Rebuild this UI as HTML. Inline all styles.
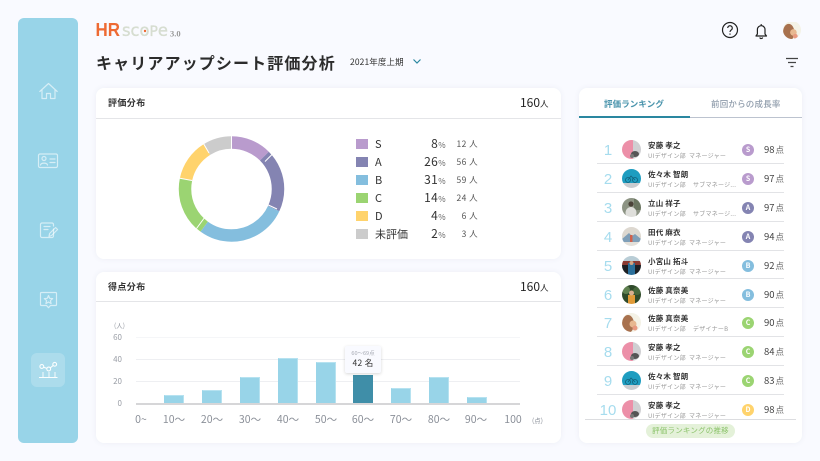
<!DOCTYPE html>
<html lang="ja"><head><meta charset="utf-8"><title>評価分析</title>
<style>
*{box-sizing:border-box}
html,body{margin:0;padding:0}
body{position:relative;width:820px;height:461px;overflow:hidden;background:#f9faff;font-family:"Noto Sans CJK JP","Liberation Sans",sans-serif;color:#333}
.a{position:absolute;white-space:nowrap}
.card{position:absolute;background:#fff;border-radius:8px;box-shadow:0 0 6px rgba(70,80,120,.07)}
.sw{position:absolute;left:356px;width:12px;height:10px}
.lb{position:absolute;left:375px;font-size:11px;line-height:14px;color:#333}
.pc{position:absolute;width:60px;left:386px;text-align:right;font-size:12px;line-height:14px;color:#333;letter-spacing:.4px}
.pc small{font-size:8px;color:#666}
.ct{position:absolute;width:50px;left:428px;text-align:right;font-size:8.5px;line-height:14px;color:#555;letter-spacing:.4px}
.yl{position:absolute;width:20px;left:102px;text-align:right;font-size:8px;line-height:10px;color:#9a9ea6}
.xl{position:absolute;width:40px;text-align:center;top:413px;font-size:10.5px;line-height:13px;color:#8a8f98}
.bar{position:absolute;background:#98d4e8;width:20px;border:1px solid #b6e2f0;border-bottom:0;border-left-color:#98d4e8}
.gl{position:absolute;left:136px;width:384px;height:1px;background:#eeeff2}
.r{position:absolute;left:579px;width:223px;height:29px}
.n{position:absolute;left:15px;width:28px;top:8px;text-align:center;font-family:"Liberation Sans",sans-serif;font-size:15px;line-height:17px;color:#a6dcee}
.av{position:absolute;left:43px;top:6px;width:19px;height:19px;border-radius:50%;overflow:hidden}
.av svg{display:block;filter:blur(.3px)}
.nm{position:absolute;left:69px;top:7px;font-size:7.5px;line-height:10px;font-weight:700;color:#333;letter-spacing:.2px}
.sb{position:absolute;left:69px;top:16.500px;width:100px;height:9px;font-size:6px;line-height:9px;color:#999;letter-spacing:.25px;white-space:nowrap}
.sb i{font-style:normal;position:absolute;left:41px;top:0}
.sb i.w{left:45px}
.bd{position:absolute;left:163px;top:10px;width:12px;height:12px;border-radius:50%;color:#fff;font-size:7px;font-weight:700;line-height:12px;text-align:center}
.sc{position:absolute;left:176px;width:29px;top:9px;font-size:9.5px;line-height:12px;color:#444;text-align:right;white-space:nowrap}
.sc small{font-size:8.5px;color:#666;margin-left:1px}
.dv{position:absolute;left:597px;width:187px;height:1px;background:#e2e3e6}
</style></head>
<body>
<svg width="0" height="0" style="position:absolute">
<defs>
<symbol id="a1" viewBox="0 0 19 19"><rect width="19" height="19" fill="#cfcfd2"/><rect width="11" height="19" fill="#ec8fa8"/><ellipse cx="13" cy="14" rx="4" ry="3" fill="#555"/><circle cx="10" cy="16" r="2" fill="#777"/></symbol>
<symbol id="a2" viewBox="0 0 19 19"><rect width="19" height="19" fill="#1e9dc0"/><rect y="14" width="19" height="5" fill="#c8ccd0"/><circle cx="6" cy="11" r="2.500" fill="none" stroke="#13607a" stroke-width=".8"/><circle cx="13" cy="11" r="2.500" fill="none" stroke="#13607a" stroke-width=".8"/><path d="M6 11l3-4 4 4" fill="none" stroke="#13607a" stroke-width=".8"/></symbol>
<symbol id="a3" viewBox="0 0 19 19"><rect width="19" height="19" fill="#8d9484"/><rect x="12" width="7" height="12" fill="#6a7560"/><ellipse cx="9" cy="15" rx="5.500" ry="6" fill="#dfdfdb"/><circle cx="9" cy="6" r="2.600" fill="#4a4238"/></symbol>
<symbol id="a4" viewBox="0 0 19 19"><rect width="19" height="19" fill="#ddd8d0"/><path d="M0 12L7 6l3 3 3-2 6 5v7H0z" fill="#7f9fb8"/><rect y="15" width="19" height="4" fill="#e3e0da"/><rect x="8" y="8" width="2.500" height="7" fill="#d0604a"/></symbol>
<symbol id="a5" viewBox="0 0 19 19"><rect width="19" height="19" fill="#1c2024"/><rect width="19" height="5" fill="#b9cdd6"/><rect y="5" width="19" height="4" fill="#8a3a32"/><rect x="6" y="7" width="7" height="12" fill="#2a6f9a"/><circle cx="9.500" cy="7" r="2" fill="#d3a585"/></symbol>
<symbol id="a6" viewBox="0 0 19 19"><rect width="19" height="19" fill="#2f4a2a"/><circle cx="4" cy="5" r="4" fill="#5f8050"/><circle cx="15" cy="6" r="4" fill="#46683c"/><rect x="6" y="10" width="7" height="9" fill="#e09a38"/><circle cx="9.500" cy="8" r="2.500" fill="#d8b090"/></symbol>
<symbol id="a7" viewBox="0 0 19 19"><rect width="19" height="19" fill="#f4f2e6"/><ellipse cx="6" cy="11" rx="6" ry="9" fill="#a8714e"/><circle cx="11" cy="11" r="3.500" fill="#e8b890"/><circle cx="13" cy="15" r="2.500" fill="#e89a80"/></symbol>
</defs></svg>

<!-- sidebar -->
<div style="position:absolute;left:18px;top:18px;width:60px;height:425px;border-radius:6px;background:#98d4e8"></div>
<div style="position:absolute;left:31px;top:353px;width:34px;height:34px;border-radius:6px;background:rgba(255,255,255,.2)"></div>
<svg class="a" style="left:0;top:0" width="80" height="400" viewBox="0 0 80 400" fill="none">
<g stroke="#fff" stroke-opacity=".6" stroke-width="1.200" stroke-linejoin="round" stroke-linecap="round">
<path d="M39.800 91.500L48.500 83.500l8.700 8M42 90v8.500h4.500v-5h4v5H55V90"/>
<rect x="38.500" y="154" width="19" height="13.500" rx="1.500"/>
<circle cx="44" cy="158.500" r="2"/><path d="M40.500 165c.5-2.500 6.500-2.500 7 0M50 159h5M50 162.500h5"/>
<path d="M53.500 229v7a1.500 1.500 0 0 1-1.500 1.500H42a1.500 1.500 0 0 1-1.500-1.500v-11.500a1.500 1.500 0 0 1 1.500-1.500h10a1.500 1.500 0 0 1 1.500 1.500v1.500"/>
<path d="M44 226.500h6M44 229.500h4M49 236.500l.6-3 6-6 2 2-6 6z"/>
<path d="M41.500 292.500h14a1 1 0 0 1 1 1v11a1 1 0 0 1-1 1h-5l-2 2.200-2-2.200h-5a1 1 0 0 1-1-1v-11a1 1 0 0 1 1-1z"/>
<path d="M48.500 295.500l1.200 2.800 3 .3-2.300 2 .7 3-2.600-1.600-2.600 1.600.7-3-2.300-2 3-.3z"/>
</g>
<g stroke="#fff" stroke-width="1.100" stroke-opacity=".95">
<circle cx="41.800" cy="366.500" r="1.900"/><circle cx="48.700" cy="369" r="1.900"/><circle cx="54.700" cy="364.300" r="1.900"/>
<path d="M43.600 367.200l3.300 1.200M50.300 367.800l2.900-2.300M39 377.500h18.500"/>
<path d="M43 372v5M49 372v5M55 372v5" stroke-opacity=".8"/>
</g>
</svg>

<!-- logo -->
<svg class="a" style="left:95px;top:20px" width="90" height="20" viewBox="0 0 90 20">
<text x="0.500" y="16" font-family="Liberation Sans" font-size="18" font-weight="700" fill="#ee6a33" textLength="24.500" lengthAdjust="spacingAndGlyphs">HR</text>
<text x="27" y="16" font-family="DejaVu Sans" font-size="16.500" fill="#d6ddd0" stroke="#d6ddd0" stroke-width=".35" textLength="46" lengthAdjust="spacingAndGlyphs">sco<tspan font-size="14">P</tspan>e</text>
<circle cx="50" cy="11" r="1.200" fill="#ee6a33"/>
<text x="75" y="16.500" font-family="Liberation Serif" font-size="8.500" font-weight="700" fill="#999">3.0</text>
</svg>

<!-- title -->
<div class="a" style="left:96px;top:51px;font-size:16px;line-height:22px;font-weight:700;letter-spacing:1.130px;color:#2c2c2c">キャリアアップシート評価分析</div>
<div class="a" style="left:350px;top:55px;font-size:8.500px;line-height:14px;color:#333;letter-spacing:.1px">2021年度上期</div>
<svg class="a" style="left:412px;top:58px" width="10" height="7" fill="none"><path d="M1.500 1.500L5 5l3.500-3.500" stroke="#2a87a0" stroke-width="1.200"/></svg>

<!-- top icons -->
<svg class="a" style="left:715px;top:15px" width="95" height="58" viewBox="0 0 95 58" fill="none" stroke="#222">
<circle cx="15" cy="15" r="7.500" stroke-width="1.200"/>
<path d="M12.700 13a2.300 2.300 0 1 1 3.500 2c-.8.500-1.200 1-1.200 2" stroke-width="1.200"/>
<path d="M15 18.500v1.200" stroke-width="1.200"/>
<path d="M41 21h10.500l-1.500-2v-4.500a3.800 3.800 0 0 0-7.600 0V19z" stroke-width="1.200" stroke-linejoin="round"/>
<path d="M44.700 22.500a1.600 1.600 0 0 0 3 0M46.200 9v1.500" stroke-width="1.100"/>
<path d="M71 43.500h12M73 47.500h8M75.500 51.500h3" stroke="#444" stroke-width="1.200"/>
</svg>
<div class="a" style="left:783px;top:21px;width:18px;height:18px;border-radius:50%;overflow:hidden"><svg width="18" height="18" style="filter:blur(.3px)"><use href="#a7"/></svg></div>

<!-- card 1 -->
<div class="card" style="left:96px;top:88px;width:465px;height:171px"></div>
<div class="a" style="left:108px;top:96px;font-size:9px;line-height:14px;font-weight:700;letter-spacing:.4px;color:#333">評価分布</div>
<div class="a" style="left:520px;top:95px;font-size:12px;line-height:16px;color:#222">160<span style="font-size:8.500px">人</span></div>
<div class="a" style="left:96px;top:117.500px;width:465px;height:1px;background:#e4e5e8"></div>

<svg class="a" style="left:170px;top:128px" width="124" height="122" viewBox="0 0 124 122" fill="none">
<g transform="translate(61.500 61) rotate(-90)" stroke-width="12.500">
<circle r="46.500" pathLength="360" stroke="#b99bcd" stroke-dasharray="45 315" stroke-dashoffset="0"/>
<circle r="46.500" pathLength="360" stroke="#8484b2" stroke-dasharray="70 290" stroke-dashoffset="-45"/>
<circle r="46.500" pathLength="360" stroke="#84bede" stroke-dasharray="101 259" stroke-dashoffset="-115"/>
<circle r="46.500" pathLength="360" stroke="#9bd472" stroke-dasharray="66 294" stroke-dashoffset="-216"/>
<circle r="46.500" pathLength="360" stroke="#ffd36c" stroke-dasharray="46 314" stroke-dashoffset="-282"/>
<circle r="46.500" pathLength="360" stroke="#cccccc" stroke-dasharray="32 328" stroke-dashoffset="-328"/>
</g>
<g stroke="#fff" stroke-width="1">
<path d="M61.500 8v14M95 33.500l8.500-8.500M94 75l13 6M35 89l-8.500 11.500M22 52.500L8.500 50M39 25l-7-12"/>
</g>
</svg>

<div class="sw" style="top:139px;background:#b99bcd"></div><div class="lb" style="top:137px">S</div><div class="pc" style="top:137px">8<small>%</small></div><div class="ct" style="top:137px">12 人</div>
<div class="sw" style="top:157px;background:#8484b2"></div><div class="lb" style="top:155px">A</div><div class="pc" style="top:155px">26<small>%</small></div><div class="ct" style="top:155px">56 人</div>
<div class="sw" style="top:175px;background:#84bede"></div><div class="lb" style="top:173px">B</div><div class="pc" style="top:173px">31<small>%</small></div><div class="ct" style="top:173px">59 人</div>
<div class="sw" style="top:193px;background:#9bd472"></div><div class="lb" style="top:191px">C</div><div class="pc" style="top:191px">14<small>%</small></div><div class="ct" style="top:191px">24 人</div>
<div class="sw" style="top:211px;background:#ffd36c"></div><div class="lb" style="top:209px">D</div><div class="pc" style="top:209px">4<small>%</small></div><div class="ct" style="top:209px">6 人</div>
<div class="sw" style="top:229px;background:#cccccc"></div><div class="lb" style="top:227px">未評価</div><div class="pc" style="top:227px">2<small>%</small></div><div class="ct" style="top:227px">3 人</div>

<!-- card 2 -->
<div class="card" style="left:96px;top:272px;width:465px;height:171px"></div>
<div class="a" style="left:108px;top:280px;font-size:9px;line-height:14px;font-weight:700;letter-spacing:.4px;color:#333">得点分布</div>
<div class="a" style="left:520px;top:279px;font-size:12px;line-height:16px;color:#222">160<span style="font-size:8.500px">人</span></div>
<div class="a" style="left:96px;top:301px;width:465px;height:1px;background:#e4e5e8"></div>

<div class="a" style="left:114px;top:320px;font-size:6.500px;line-height:10px;color:#9a9ea6">(人)</div>
<div class="yl" style="top:333px">60</div><div class="yl" style="top:355px">40</div><div class="yl" style="top:377px">20</div><div class="yl" style="top:399px">0</div>
<div class="gl" style="top:337px;background:#f5f6f8"></div><div class="gl" style="top:359px"></div><div class="gl" style="top:381px"></div>
<div class="bar" style="left:164px;top:395px;height:9px"></div>
<div class="bar" style="left:202px;top:390px;height:14px"></div>
<div class="bar" style="left:240px;top:377px;height:27px"></div>
<div class="bar" style="left:278px;top:358px;height:46px"></div>
<div class="bar" style="left:316px;top:362px;height:42px"></div>
<div class="bar" style="left:353px;top:375px;height:29px;background:#3f8ea8;border-color:#3f8ea8"></div>
<div class="bar" style="left:391px;top:388px;height:16px"></div>
<div class="bar" style="left:429px;top:377px;height:27px"></div>
<div class="bar" style="left:467px;top:397px;height:7px"></div>
<div class="gl" style="top:403px;height:1.500px;background:#d6d6d8"></div>
<div class="xl" style="left:121px">0~</div><div class="xl" style="left:154px">10〜</div><div class="xl" style="left:192px">20〜</div><div class="xl" style="left:230px">30〜</div><div class="xl" style="left:268px">40〜</div><div class="xl" style="left:306px">50〜</div><div class="xl" style="left:343px">60〜</div><div class="xl" style="left:381px">70〜</div><div class="xl" style="left:419px">80〜</div><div class="xl" style="left:456px">90〜</div><div class="xl" style="left:493px">100</div>
<div class="a" style="left:532px;top:414px;font-size:6.500px;line-height:12px;color:#8a8f98">(点)</div>

<div class="a" style="left:345px;top:346px;width:36px;height:27px;background:#f9faff;border-radius:2px;box-shadow:0 1px 3px rgba(0,0,0,.16)"></div>
<div class="a" style="left:345px;top:349px;width:36px;text-align:center;font-size:5.500px;line-height:8px;color:#a5a9b2">60〜69点</div>
<div class="a" style="left:345px;top:358px;width:36px;text-align:center;font-size:8.500px;line-height:11px;color:#333;letter-spacing:.3px">42 名</div>

<!-- ranking card -->
<div class="card" style="left:579px;top:88px;width:223px;height:355px"></div>
<div class="a" style="left:604px;top:98px;font-size:8.500px;line-height:13px;font-weight:700;color:#4a94ac;letter-spacing:.1px">評価ランキング</div>
<div class="a" style="left:711px;top:98px;font-size:8.500px;line-height:13px;font-weight:500;color:#8f9cab;letter-spacing:.2px">前回からの成長率</div>
<div class="a" style="left:579px;top:116.500px;width:223px;height:1px;background:#bcc3cf"></div>
<div class="a" style="left:579px;top:116px;width:111px;height:1.500px;background:#2a87a0"></div>

<div class="r" style="top:134px"><div class="n">1</div><div class="av"><svg width="19" height="19"><use href="#a1"/></svg></div><div class="nm">安藤 孝之</div><div class="sb">UIデザイン部<i>マネージャー</i></div><div class="bd" style="background:#b99bcd">S</div><div class="sc">98<small>点</small></div></div>
<div class="dv" style="top:163px"></div>
<div class="r" style="top:163px"><div class="n">2</div><div class="av"><svg width="19" height="19"><use href="#a2"/></svg></div><div class="nm">佐々木 智朗</div><div class="sb">UIデザイン部<i class="w">サブマネージ...</i></div><div class="bd" style="background:#b99bcd">S</div><div class="sc">97<small>点</small></div></div>
<div class="dv" style="top:192px"></div>
<div class="r" style="top:192px"><div class="n">3</div><div class="av"><svg width="19" height="19"><use href="#a3"/></svg></div><div class="nm">立山 祥子</div><div class="sb">UIデザイン部<i class="w">サブマネージ...</i></div><div class="bd" style="background:#8484b2">A</div><div class="sc">97<small>点</small></div></div>
<div class="dv" style="top:221px"></div>
<div class="r" style="top:221px"><div class="n">4</div><div class="av"><svg width="19" height="19"><use href="#a4"/></svg></div><div class="nm">田代 麻衣</div><div class="sb">UIデザイン部<i>マネージャー</i></div><div class="bd" style="background:#8484b2">A</div><div class="sc">94<small>点</small></div></div>
<div class="dv" style="top:250px"></div>
<div class="r" style="top:250px"><div class="n">5</div><div class="av"><svg width="19" height="19"><use href="#a5"/></svg></div><div class="nm">小宮山 拓斗</div><div class="sb">UIデザイン部<i>マネージャー</i></div><div class="bd" style="background:#84bede">B</div><div class="sc">92<small>点</small></div></div>
<div class="dv" style="top:278px"></div>
<div class="r" style="top:279px"><div class="n">6</div><div class="av"><svg width="19" height="19"><use href="#a6"/></svg></div><div class="nm">佐藤 真奈美</div><div class="sb">UIデザイン部<i>マネージャー</i></div><div class="bd" style="background:#84bede">B</div><div class="sc">90<small>点</small></div></div>
<div class="dv" style="top:307px"></div>
<div class="r" style="top:307px"><div class="n">7</div><div class="av"><svg width="19" height="19"><use href="#a7"/></svg></div><div class="nm">佐藤 真奈美</div><div class="sb">UIデザイン部<i class="w">デザイナーB</i></div><div class="bd" style="background:#9bd472">C</div><div class="sc">90<small>点</small></div></div>
<div class="dv" style="top:336px"></div>
<div class="r" style="top:336px"><div class="n">8</div><div class="av"><svg width="19" height="19"><use href="#a1"/></svg></div><div class="nm">安藤 孝之</div><div class="sb">UIデザイン部<i>マネージャー</i></div><div class="bd" style="background:#9bd472">C</div><div class="sc">84<small>点</small></div></div>
<div class="dv" style="top:365px"></div>
<div class="r" style="top:365px"><div class="n">9</div><div class="av"><svg width="19" height="19"><use href="#a2"/></svg></div><div class="nm">佐々木 智朗</div><div class="sb">UIデザイン部<i>マネージャー</i></div><div class="bd" style="background:#9bd472">C</div><div class="sc">83<small>点</small></div></div>
<div class="dv" style="top:394px"></div>
<div class="r" style="top:394px"><div class="n">10</div><div class="av"><svg width="19" height="19"><use href="#a1"/></svg></div><div class="nm">安藤 孝之</div><div class="sb">UIデザイン部<i>マネージャー</i></div><div class="bd" style="background:#ffd36c">D</div><div class="sc">98<small>点</small></div></div>

<div class="a" style="left:585px;top:419px;width:211px;height:1px;background:#dcdde0"></div>
<div class="a" style="left:646px;top:424px;width:89px;height:14px;border-radius:7px;background:#e4f1d9;text-align:center;font-size:7.500px;line-height:14px;color:#8bc36a;letter-spacing:.2px">評価ランキングの推移</div>
</body></html>
